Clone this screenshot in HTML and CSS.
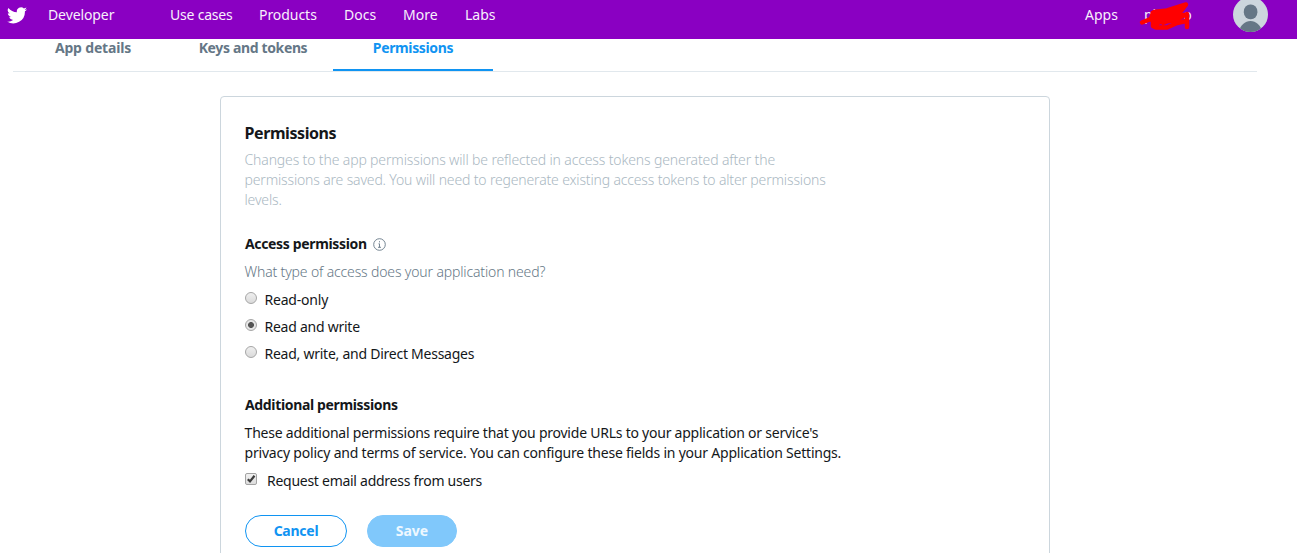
FILE: index.html
```
<!DOCTYPE html>
<html lang="en">
<head>
<meta charset="utf-8">
<title>Permissions</title>
<link rel="stylesheet" href="styles.css">
</head>
<body>
<header class="topbar">
  <svg class="bird" viewBox="0 0 24 20" aria-hidden="true"><path d="M24 2.400c-.9.400-1.800.700-2.800.8 1-.6 1.800-1.600 2.200-2.700-1 .6-2 1-3.100 1.200A4.920 4.920 0 0 0 11.900 6.200C7.800 6 4.200 4 1.700.9a4.900 4.900 0 0 0 1.500 6.600c-.8 0-1.600-.2-2.200-.6v.1c0 2.400 1.700 4.400 3.900 4.800-.7.200-1.500.2-2.200.1.600 2 2.400 3.400 4.600 3.400A9.900 9.900 0 0 1 0 17.300 14 14 0 0 0 21.500 4.900c1-.7 1.800-1.500 2.500-2.500z"/></svg>
  <nav class="nav">
    <a class="brand">Developer</a>
    <a class="use-cases">Use cases</a>
    <a class="products">Products</a>
    <a class="docs">Docs</a>
    <a class="more">More</a>
    <a class="labs">Labs</a>
  </nav>
  <div class="account">
    <a class="apps">Apps</a>
    <div class="user">
      <span>pl</span><span class="user-end">o</span>
      <svg class="scribble" viewBox="0 0 54 32" aria-hidden="true"><path d="M5 22.500L16 18M17 12L30 10.500L49 4.500L43 12L33 17L19 24M16 19V26L19 27.500H30L40 23L49 21M26 22L38 20L50 14V27M26 23L46 15"/><path class="fill" d="M14 11L30 10L47 5L42 14L46 18L36 20L22 21L16 25L12 18Z"/></svg>
    </div>
    <svg class="avatar" viewBox="0 0 35 35" aria-hidden="true">
      <defs><clipPath id="round"><circle cx="17.500" cy="17.500" r="17.500"/></clipPath></defs>
      <g clip-path="url(#round)"><path fill="#ccd6dd" d="M0 0h35v35H0z"/><rect x="10.800" y="7.500" width="13.600" height="14.800" rx="6.500" ry="7" fill="#657786"/><path fill="#657786" d="M6 35c1-7 6.200-11 11.500-11S28 28 29 35z"/></g>
    </svg>
  </div>
</header>
<div class="tabs">
  <a class="tab details">App details</a>
  <a class="tab">Keys and tokens</a>
  <a class="tab active">Permissions</a>
</div>
<main class="card">
  <h1>Permissions</h1>
  <p class="intro">Changes to the app permissions will be reflected in access tokens generated after the<br><span class="intro-middle">permissions are saved. You will need to regenerate existing access tokens to alter permissions</span><br>levels.</p>
  <h2 class="access">Access permission
    <svg class="info" viewBox="0 0 13 13" aria-hidden="true"><circle cx="6.500" cy="6.500" r="5.800"/><path d="M6.500 3.200v1.200M5.500 5.800h1v3.500M5 9.300h3"/></svg>
  </h2>
  <p class="question">What type of access does your application need?</p>
  <div class="options">
    <label class="option only"><i class="radio"></i>Read-only</label>
    <label class="option"><i class="radio checked"></i>Read and write</label>
    <label class="option"><i class="radio"></i>Read, write, and Direct Messages</label>
  </div>
  <h2 class="additional">Additional permissions</h2>
  <p class="note">These additional permissions require that you provide URLs to your application or service's<br><span class="note-end">privacy policy and terms of service. You can configure these fields in your Application Settings.</span></p>
  <label class="email">
    <svg class="checkbox" viewBox="0 0 12 12" aria-hidden="true"><defs><linearGradient id="box" x2="0" y2="1"><stop stop-color="#f2f2f2"/><stop offset="1" stop-color="#dcdcdc"/></linearGradient></defs><rect x=".5" y=".5" width="11" height="11" rx="1.500" fill="url(#box)" stroke="#a3a3a3"/><path d="M2.800 6.200L5 8.400L9.500 2.800" fill="none" stroke="#3c3c3c" stroke-width="2.200"/></svg>
    Request email address from users
  </label>
  <div class="actions"><button class="cancel">Cancel</button><button class="save">Save</button></div>
</main>
</body>
</html>
```
FILE: styles.css
```
* { box-sizing: border-box; }
body {
  margin: 0;
  height: 553px;
  overflow: hidden;
  background: #fff;
  color: #14171a;
  font: 14px/20px "Noto Sans", sans-serif;
}
h1, h2, p { margin: 0; }

.topbar {
  height: 39px;
  padding: 5px 29px 0 7px;
  display: flex;
  align-items: flex-start;
  background: #8a00c2;
  color: #f8effc;
}
.bird { width: 20px; height: 17px; margin-top: 2px; fill: #fff; }
.nav { display: flex; margin-left: 21px; }
.brand { width: 122px; letter-spacing: -.1px; }
.use-cases { width: 89px; letter-spacing: -.2px; }
.products { width: 85px; letter-spacing: -.05px; }
.docs { width: 59px; }
.more { width: 62px; }
.account { display: flex; margin-left: auto; }
.apps { width: 52px; }
.user { position: relative; width: 96px; padding-left: 7px; }
.user-end { margin-left: 27px; }
.scribble {
  position: absolute;
  left: 0;
  top: -5px;
  width: 54px;
  height: 32px;
  fill: none;
  stroke: #f00;
  stroke-width: 4.500;
  stroke-linecap: round;
  stroke-linejoin: round;
}
.scribble .fill { fill: #f00; stroke: none; }
.avatar { width: 35px; height: 35px; margin-top: -8px; }

.tabs {
  width: 1244px;
  height: 33px;
  margin-left: 13px;
  display: flex;
  border-bottom: 1px solid #e1e8ed;
}
.tab {
  width: 160px;
  height: 32px;
  line-height: 18px;
  text-align: center;
  font-weight: 700;
  letter-spacing: -.36px;
  color: #657786;
}
.details { letter-spacing: -.18px; }
.active { color: #1094f2; border-bottom: 2px solid #1094f2; }

.card {
  width: 830px;
  height: 480px;
  margin: 24px 0 0 220px;
  padding: 25px 23px 0 24px;
  border: 1px solid #ccd6dd;
  border-radius: 4px;
  white-space: nowrap;
}
h1 { margin-left: -.5px; font-size: 16px; line-height: 22px; letter-spacing: -.42px; }
.intro {
  margin: 6px 0 0 -.5px;
  font-weight: 300;
  color: #aab8c2;
  letter-spacing: -.14px;
}
.intro-middle { letter-spacing: -.16px; }
h2 { font-size: 14px; line-height: 20px; letter-spacing: -.35px; }
.access { display: flex; align-items: center; gap: 6px; margin-top: 24px; }
.info { width: 13px; height: 13px; fill: none; stroke: #657786; stroke-width: .9; }
.question { margin: 8px 0 0 -.5px; font-weight: 300; color: #657786; letter-spacing: -.15px; }
.options { display: flex; flex-direction: column; gap: 7px; margin-top: 8px; letter-spacing: -.25px; }
.option { display: flex; align-items: flex-start; gap: 7.500px; }
.only { letter-spacing: -.2px; }
.radio {
  width: 12px;
  height: 12px;
  margin-top: 2px;
  border: 1px solid #a6a6a6;
  border-radius: 50%;
  background: linear-gradient(#efefef, #dadada);
}
.checked { background: radial-gradient(circle, #555 0 2.600px, #e6e6e6 3.300px); }
.additional { margin-top: 31px; }
.note { margin: 8px 0 0 -.4px; letter-spacing: -.235px; }
.note-end { letter-spacing: -.215px; }
.email {
  display: flex;
  align-items: flex-start;
  gap: 10px;
  margin-top: 8px;
  letter-spacing: -.27px;
}
.checkbox { width: 12px; height: 12px; margin-top: 2px; }
.actions { display: flex; gap: 20px; margin-top: 24px; }
button {
  height: 32px;
  padding: 0;
  border: 1px solid #1094f2;
  border-radius: 16px;
  background: #fff;
  color: #1094f2;
  font: 700 14px/20px "Noto Sans", sans-serif;
}
.cancel { width: 102px; letter-spacing: -.25px; }
.save { width: 90px; border-color: #80c8fb; background: #80c8fb; color: #eef8ff; }
```
